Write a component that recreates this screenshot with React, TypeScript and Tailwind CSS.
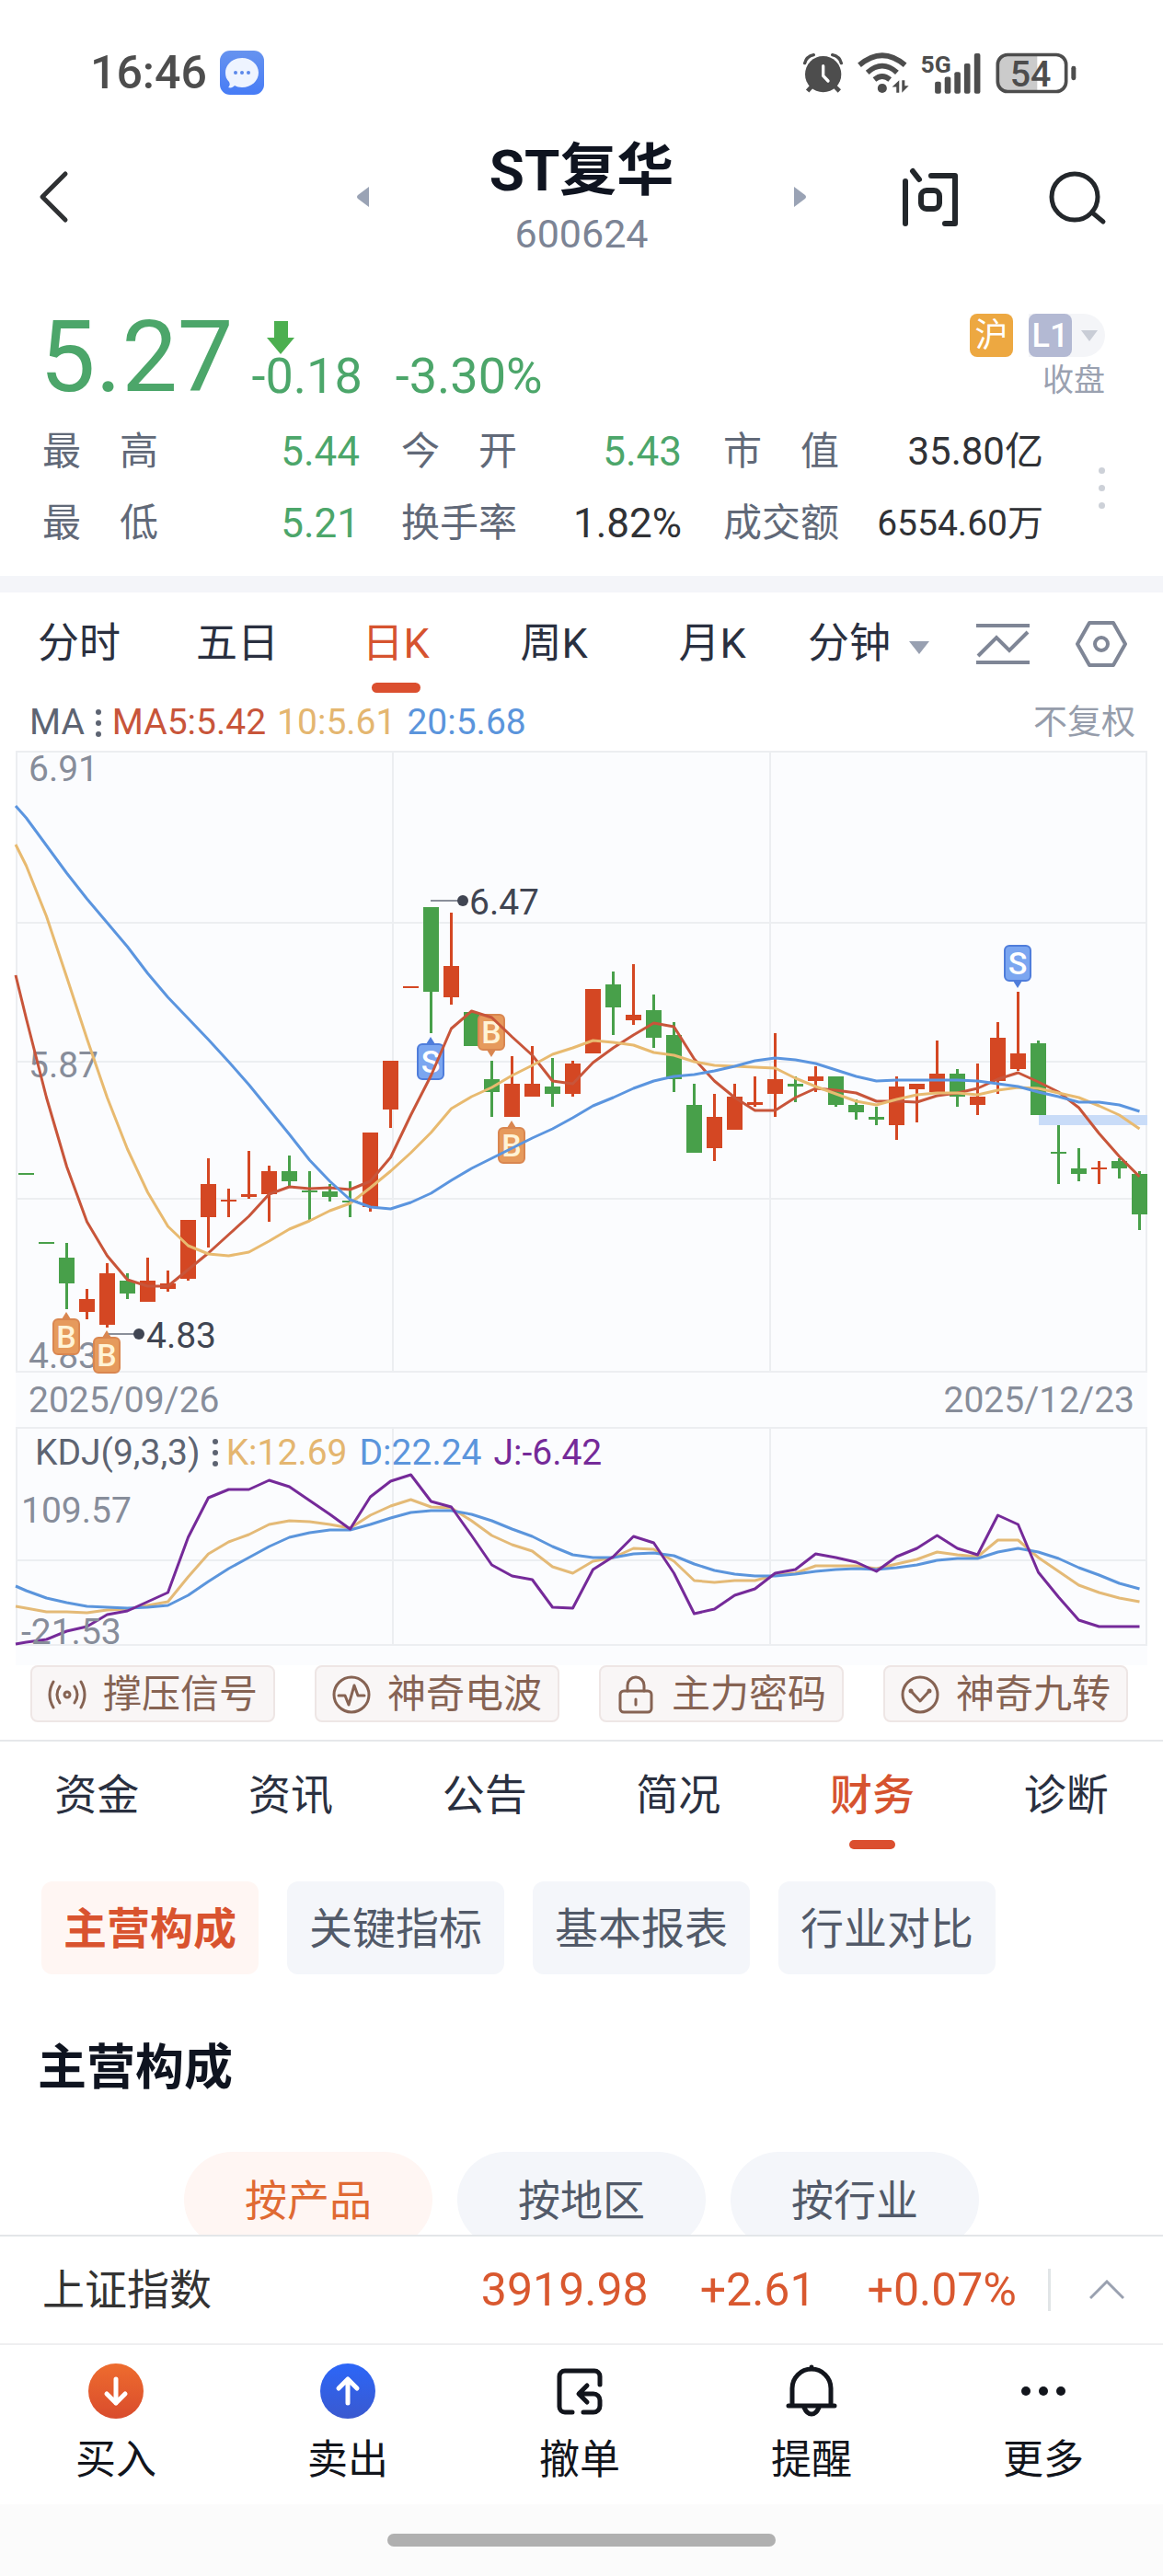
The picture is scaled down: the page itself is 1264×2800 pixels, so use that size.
import { useState } from "react";

type Dir = "up" | "down";
// [direction, high, body top, body bottom, low]
type Candle = [Dir, number, number, number, number];

const STEP = 22;
const FIRST_X = 28.5;
const xAt = (i: number) => FIRST_X + i * STEP;

const CANDLES: Candle[] = [
  ["down", 1275, 1275, 1277, 1277],
  ["down", 1350, 1350, 1352, 1352],
  ["down", 1351, 1367, 1395, 1423],
  ["up", 1401, 1412, 1426, 1434],
  ["up", 1373, 1384, 1440, 1443],
  ["down", 1384, 1392, 1406, 1412],
  ["up", 1367, 1392, 1415, 1415],
  ["up", 1381, 1395, 1401, 1404],
  ["up", 1326, 1326, 1390, 1392],
  ["up", 1259, 1287, 1323, 1356],
  ["up", 1292, 1304, 1306, 1323],
  ["up", 1251, 1298, 1301, 1303],
  ["up", 1267, 1273, 1298, 1328],
  ["down", 1256, 1273, 1284, 1289],
  ["down", 1273, 1294, 1296, 1327],
  ["down", 1287, 1295, 1301, 1306],
  ["down", 1284, 1305, 1307, 1323],
  ["up", 1231, 1231, 1312, 1317],
  ["up", 1153, 1153, 1206, 1226],
  ["up", 1072, 1072, 1074, 1074],
  ["down", 986, 986, 1078, 1123],
  ["up", 992, 1050, 1084, 1092],
  ["down", 1100, 1100, 1137, 1137],
  ["down", 1153, 1173, 1187, 1214],
  ["up", 1148, 1178, 1214, 1214],
  ["up", 1137, 1178, 1192, 1192],
  ["down", 1150, 1181, 1189, 1203],
  ["up", 1153, 1156, 1189, 1192],
  ["up", 1075, 1075, 1145, 1145],
  ["down", 1056, 1070, 1095, 1125],
  ["up", 1048, 1103, 1109, 1114],
  ["down", 1081, 1098, 1128, 1139],
  ["down", 1111, 1125, 1173, 1187],
  ["down", 1178, 1201, 1253, 1253],
  ["up", 1189, 1214, 1248, 1262],
  ["up", 1178, 1192, 1228, 1228],
  ["up", 1170, 1198, 1201, 1203],
  ["up", 1123, 1173, 1189, 1214],
  ["down", 1170, 1178, 1181, 1198],
  ["up", 1159, 1170, 1175, 1187],
  ["down", 1170, 1170, 1201, 1203],
  ["down", 1195, 1201, 1209, 1217],
  ["down", 1203, 1214, 1217, 1223],
  ["up", 1170, 1181, 1223, 1239],
  ["up", 1178, 1178, 1184, 1220],
  ["up", 1131, 1167, 1187, 1187],
  ["down", 1162, 1167, 1192, 1203],
  ["up", 1156, 1192, 1201, 1212],
  ["up", 1111, 1128, 1175, 1189],
  ["up", 1078, 1145, 1162, 1164],
  ["down", 1131, 1134, 1212, 1212],
  ["down", 1223, 1252, 1254, 1287],
  ["down", 1248, 1270, 1276, 1284],
  ["up", 1262, 1269, 1271, 1287],
  ["down", 1259, 1262, 1270, 1281],
  ["down", 1273, 1276, 1320, 1337],
];

// The first value of every series sits on the left edge, the rest on the candles.
const MA5 = [1060, 1107, 1193, 1268, 1328, 1365, 1391, 1398, 1398, 1380, 1362, 1342, 1322, 1298, 1290, 1292, 1291, 1293, 1284, 1258, 1212, 1169, 1118, 1099, 1106, 1127, 1147, 1175, 1178, 1155, 1139, 1125, 1112, 1116, 1151, 1175, 1193, 1207, 1207, 1193, 1183, 1185, 1188, 1197, 1197, 1198, 1191, 1188, 1183, 1173, 1166, 1176, 1187, 1204, 1232, 1257, 1279];
const MA10 = [918, 941, 996, 1062, 1129, 1193, 1249, 1296, 1333, 1354, 1363, 1365, 1361, 1349, 1336, 1327, 1316, 1308, 1291, 1273, 1253, 1231, 1205, 1192, 1182, 1169, 1158, 1146, 1139, 1131, 1133, 1136, 1144, 1147, 1154, 1158, 1159, 1160, 1161, 1172, 1181, 1189, 1197, 1201, 1195, 1190, 1188, 1188, 1190, 1185, 1182, 1183, 1188, 1193, 1202, 1212, 1227];
const MA20 = [876, 889, 919, 949, 977, 1003, 1029, 1058, 1084, 1107, 1130, 1154, 1179, 1206, 1233, 1261, 1284, 1304, 1312, 1314, 1307, 1297, 1283, 1270, 1259, 1248, 1237, 1227, 1215, 1202, 1193, 1183, 1175, 1170, 1168, 1164, 1159, 1153, 1150, 1152, 1156, 1163, 1170, 1175, 1174, 1174, 1174, 1174, 1175, 1178, 1181, 1187, 1192, 1198, 1198, 1201, 1208];

const KDJ_K = [1746, 1748, 1752, 1752, 1753, 1750, 1749, 1745, 1741, 1714, 1689, 1676, 1668, 1657, 1653, 1654, 1657, 1661, 1647, 1637, 1630, 1638, 1639, 1653, 1669, 1679, 1686, 1703, 1710, 1697, 1693, 1683, 1684, 1697, 1718, 1720, 1718, 1718, 1712, 1710, 1702, 1702, 1702, 1705, 1700, 1695, 1687, 1690, 1692, 1674, 1674, 1693, 1708, 1723, 1731, 1737, 1741];
const KDJ_D = [1724, 1729, 1737, 1742, 1746, 1747, 1748, 1747, 1745, 1734, 1719, 1705, 1693, 1681, 1671, 1666, 1663, 1663, 1657, 1650, 1644, 1642, 1642, 1646, 1653, 1662, 1670, 1681, 1690, 1693, 1693, 1689, 1688, 1691, 1700, 1707, 1711, 1713, 1713, 1711, 1708, 1706, 1705, 1706, 1704, 1701, 1696, 1694, 1694, 1687, 1683, 1687, 1694, 1704, 1712, 1721, 1727];
const KDJ_J = [1787, 1785, 1782, 1773, 1768, 1755, 1751, 1741, 1731, 1671, 1628, 1619, 1619, 1609, 1616, 1631, 1646, 1662, 1627, 1610, 1603, 1632, 1638, 1669, 1701, 1713, 1717, 1747, 1748, 1706, 1692, 1670, 1677, 1710, 1754, 1749, 1734, 1727, 1710, 1706, 1689, 1693, 1698, 1708, 1692, 1683, 1669, 1683, 1690, 1647, 1657, 1709, 1736, 1761, 1768, 1768, 1768];

const toPoints = (values: number[]) =>
  values.map((y, i) => `${i === 0 ? 17 : xAt(i - 1)},${y}`).join(" ");

const MARKERS = [
  { kind: "B", x: 72, top: 1433, tip: "up" },
  { kind: "B", x: 116, top: 1453, tip: "up" },
  { kind: "S", x: 468, top: 1134, tip: "up" },
  { kind: "B", x: 534, top: 1102, tip: "down" },
  { kind: "B", x: 556, top: 1225, tip: "up" },
  { kind: "S", x: 1106, top: 1027, tip: "down" },
];

const PERIODS = ["分时", "五日", "日K", "周K", "月K"];
const TABS = ["资金", "资讯", "公告", "简况", "财务", "诊断"];
const CHIPS = ["主营构成", "关键指标", "基本报表", "行业对比"];
const PILLS = ["按产品", "按地区", "按行业"];

const STATS = [
  { label: "最　高", value: "5.44", style: "text-[44px] text-[#4ca66a]" },
  { label: "今　开", value: "5.43", style: "text-[44px] text-[#4ca66a]" },
  { label: "市　值", value: "35.80亿", style: "text-[42px] text-[#303236]" },
  { label: "最　低", value: "5.21", style: "text-[44px] text-[#4ca66a]" },
  { label: "换手率", value: "1.82%", style: "text-[44px] text-[#303236]" },
  { label: "成交额", value: "6554.60万", style: "text-[39px] text-[#303236]" },
];

function StatusBar() {
  return (
    <div className="flex items-center justify-between pt-[54px] pl-[98px] pr-[94px] text-[#4d4d4d]">
      <div className="flex items-center gap-[14px]">
        <span className="text-[50px] leading-[50px] font-medium">16:46</span>
        <svg viewBox="0 0 48 48" className="size-12">
          <defs>
            <linearGradient id="msg" x1="0" y1="0" x2="0" y2="1">
              <stop offset="0" stopColor="#6693ef" />
              <stop offset="1" stopColor="#477cf6" />
            </linearGradient>
          </defs>
          <rect width="48" height="48" rx="11" fill="url(#msg)" />
          <path d="M24 8c10 0 18 7 18 16s-8 16-18 16c-3 0-6-1-8-2-2 2-4 3-7 2 2-2 2-4 1-6-3-3-4-6-4-10C6 15 14 8 24 8z" fill="#eef4ff" />
          <circle cx="17" cy="24" r="2" fill="#5b88ea" />
          <circle cx="24" cy="24" r="2" fill="#5b88ea" />
          <circle cx="31" cy="24" r="2" fill="#5b88ea" />
        </svg>
      </div>
      <div className="flex items-center">
        <svg viewBox="66 55 129 129" className="size-[43px]" fill="currentColor">
          <circle cx="131" cy="123" r="59" />
          <g fill="none" stroke="currentColor" strokeLinecap="round">
            <path d="M71 87q5-22 29-27M190 87q-5-22-29-27" strokeWidth="10" />
            <path d="M94 162l-14 16M168 162l16 16" strokeWidth="14" strokeLinecap="butt" />
            <path d="M131 96v32l16 17" stroke="#fff" strokeWidth="10" />
          </g>
        </svg>
        <svg viewBox="247 50 167 134" className="ml-4 h-[45px] w-14" fill="none" stroke="currentColor" strokeWidth="17">
          <path d="M253 91Q327 28 401 91" />
          <path d="M279 115Q327 72 375 115" />
          <path d="M302 138Q327 117 352 138" />
          <circle cx="327" cy="166" r="15" fill="currentColor" stroke="none" />
          <path d="M382 140v40h-9v-18h-14zM391 140v40l22-22h-13v-18z" fill="currentColor" stroke="none" />
        </svg>
        <svg viewBox="448 48 198 136" className="ml-3 h-[45px] w-[66px] overflow-visible" fill="currentColor">
          <text x="449" y="114" fontSize="80" fontWeight="700">5G</text>
          <rect x="496" y="144" width="20" height="39" rx="6" />
          <rect x="528" y="128" width="20" height="55" rx="6" />
          <rect x="560" y="112" width="20" height="71" rx="6" />
          <rect x="592" y="84" width="20" height="99" rx="6" />
          <rect x="625" y="51" width="20" height="132" rx="6" />
        </svg>
        <svg viewBox="698 48 264 134" className="ml-4 h-[45px] w-[88px] overflow-visible" fill="currentColor">
          <path d="M834 56H735a30 30 0 0 0-30 30v58a30 30 0 0 0 30 30h99z" fill="#cbcbcb" />
          <rect x="705" y="55" width="223" height="120" rx="32" fill="none" stroke="currentColor" strokeWidth="11" />
          <rect x="945" y="92" width="15" height="46" rx="7" />
          <text x="812" y="159" fontSize="118" fontWeight="500" textAnchor="middle">54</text>
        </svg>
      </div>
    </div>
  );
}

function Header() {
  return (
    <header className="grid grid-cols-[1fr_488px_1fr] items-center pt-[42px]">
      <div className="flex pl-[40px]">
        <button type="button" aria-label="返回">
          <svg viewBox="0 0 36 60" className="h-15 w-9" fill="none" stroke="#2f3133" strokeWidth="5" strokeLinecap="round" strokeLinejoin="round">
            <path d="M31 5L6 30l25 25" />
          </svg>
        </button>
      </div>
      <div className="flex items-center justify-between">
        <button type="button" aria-label="上一只">
          <svg viewBox="0 0 13 22" className="h-[22px] w-[13px]" fill="#9aa3b5">
            <path d="M13 0v22L1 13q-2-2 0-4z" />
          </svg>
        </button>
        <div className="text-center">
          <h1 className="text-[62px] leading-20 font-bold text-[#0f1420]">ST复华</h1>
          <p className="text-[43px] leading-14 text-[#7c8495]">600624</p>
        </div>
        <button type="button" aria-label="下一只">
          <svg viewBox="0 0 13 22" className="h-[22px] w-[13px]" fill="#9aa3b5">
            <path d="M0 0v22l12-9q2-2 0-4z" />
          </svg>
        </button>
      </div>
      <div className="flex justify-end gap-[95px] pr-[60px]">
        <button type="button" aria-label="提问">
          <svg viewBox="0 0 64 66" className="h-[66px] w-16" fill="none" stroke="#23272b" strokeWidth="6" strokeLinecap="round" strokeLinejoin="round">
            <line x1="5" y1="16" x2="5" y2="62" />
            <line x1="13" y1="5" x2="20" y2="14" />
            <polyline points="33,10 59,10 59,62 48,62" />
            <rect x="22" y="26" width="20" height="20" rx="6" />
          </svg>
        </button>
        <button type="button" aria-label="搜索">
          <svg viewBox="0 0 66 62" className="h-[62px] w-[66px]" fill="none" stroke="#23272b" strokeWidth="5" strokeLinecap="round">
            <circle cx="30" cy="31" r="25" />
            <path d="M49 48l12 10" />
          </svg>
        </button>
      </div>
    </header>
  );
}

function Quote() {
  return (
    <section className="pt-[51px]">
      <div className="flex items-end justify-between pl-[43px] pr-[63px] text-[#4ca66a]">
        <div className="flex items-end">
          <span className="text-[108px] leading-[110px]">5.27</span>
          <div className="ml-5 pb-[10px]">
            <svg viewBox="0 0 30 36" className="ml-[16px] h-9 w-[30px]">
              <path d="M8 0h15v18h7L15 36 0 18h8z" fill="#4caf50" />
            </svg>
            <p className="flex gap-9 text-[54px] leading-12">
              <span>-0.18</span>
              <span>-3.30%</span>
            </p>
          </div>
        </div>
        <div className="flex flex-col items-end self-start pt-2">
          <div className="flex gap-[17px]">
            <span className="flex h-[47px] w-[47px] items-center justify-center rounded-lg bg-[#eda841] text-[36px] leading-none text-white">沪</span>
            <button type="button" aria-label="行情级别" className="flex items-center gap-[10px] rounded-l-lg rounded-r-full bg-[#f4f5f8] pr-2">
              <span className="flex h-[47px] w-[47px] items-center justify-center rounded-lg bg-[#b3b9d3] text-[36px] leading-none font-medium text-white">L1</span>
              <svg viewBox="0 0 18 12" className="h-3 w-[18px]" fill="#c9cdd6">
                <path d="M0 0h18L9 12z" />
              </svg>
            </button>
          </div>
          <span className="text-[34px] leading-[50px] text-[#9aa1b0]">收盘</span>
        </div>
      </div>
      <div className="flex items-center justify-between pt-[9px] pb-[18px] pl-[46px] pr-[63px]">
        <dl className="grid w-[1088px] grid-cols-[344fr_304fr_347fr] gap-x-[45px]">
          {STATS.map((s) => (
            <div key={s.label} className="flex justify-between leading-[78px]">
              <dt className="text-[42px] text-[#616978]">{s.label}</dt>
              <dd className={s.style}>{s.value}</dd>
            </div>
          ))}
        </dl>
        <button type="button" aria-label="更多行情" className="flex flex-col gap-3">
          <span className="size-[7px] rounded-full bg-[#cdd1d8]" />
          <span className="size-[7px] rounded-full bg-[#cdd1d8]" />
          <span className="size-[7px] rounded-full bg-[#cdd1d8]" />
        </button>
      </div>
    </section>
  );
}

function PeriodTabs() {
  const [active, setActive] = useState("日K");

  return (
    <nav className="grid grid-cols-[repeat(5,172fr)_404fr] items-start pt-[23px] text-[45px] leading-[66px] text-[#2a3040]">
      {PERIODS.map((p) => (
        <button key={p} type="button" onClick={() => setActive(p)} className="flex flex-col items-center gap-[9px]">
          <span className={p === active ? "text-[#d6532f]" : ""}>{p}</span>
          {p === active && <span className="h-[11px] w-[53px] rounded-full bg-[#db4f2f]" />}
        </button>
      ))}
      <div className="flex items-center justify-between pl-[18px] pr-[39px]">
        <button type="button" aria-haspopup="menu" className="flex items-center gap-5">
          分钟
          <svg viewBox="0 0 22 14" className="mt-2 h-[14px] w-[22px]" fill="#98a0b1">
            <path d="M0 0h22L11 14z" />
          </svg>
        </button>
        <button type="button" aria-label="画线">
          <svg viewBox="0 0 58 48" className="h-12 w-[58px]" fill="none" stroke="#7f8696" strokeWidth="4">
            <path d="M0 4h58M0 44h58M2 37l20-20 14 14 20-20" />
          </svg>
        </button>
        <button type="button" aria-label="设置">
          <svg viewBox="0 0 56 50" className="h-[50px] w-14" fill="none" stroke="#7f8696" strokeWidth="4" strokeLinejoin="round">
            <path d="M15 2h26l13 23-13 23H15L2 25z" />
            <circle cx="28" cy="25" r="7" />
          </svg>
        </button>
      </div>
    </nav>
  );
}

function Dots() {
  return (
    <span className="flex flex-col gap-[6px]">
      <span className="size-[6px] rounded-full bg-[#5d6472]" />
      <span className="size-[6px] rounded-full bg-[#5d6472]" />
      <span className="size-[6px] rounded-full bg-[#5d6472]" />
    </span>
  );
}

function Marker({ kind, x, top, tip }: { kind: string; x: number; top: number; tip: string }) {
  const sell = kind === "S";
  const fill = sell ? "#7ba6f0" : "#e69a5c";
  const stroke = sell ? "#4f7ddb" : "#d98650";
  return (
    <g>
      <path
        d={tip === "up" ? `M${x - 5} ${top + 1}l5-8 5 8z` : `M${x - 5} ${top + 39}l5 8 5-8z`}
        fill={stroke}
      />
      <rect x={x - 14} y={top + 1} width="28" height="38" rx="5" fill={fill} stroke={stroke} strokeWidth="2" />
      <text x={x} y={top + 32} fontSize="34" fontWeight="500" textAnchor="middle" fill={sell ? "#fff" : "#fff3d6"}>
        {kind}
      </text>
    </g>
  );
}

function CandleChart() {
  return (
    <svg viewBox="17 816 1230 676" className="block w-full overflow-visible" role="img" aria-label="日K线图">
      <g stroke="#eceef1" strokeWidth="2" fill="none">
        <path d="M17 817h1230M17 1003h1230M17 1154h1230M17 1303h1230M17 1491h1230" />
        <path d="M18 816v676M427 816v676M837 816v676M1246 816v676" />
      </g>
      <rect x="1129" y="1212" width="118" height="11" fill="#c9dcf8" />
      {CANDLES.map(([dir, high, top, bottom, low], i) => (
        <g key={i} fill={dir === "up" ? "#d44723" : "#48a04a"}>
          <rect x={xAt(i) - 1.5} y={high} width="3" height={low - high} />
          <rect x={xAt(i) - 8.5} y={top} width="17" height={bottom - top} />
        </g>
      ))}
      <g fontSize="39" fill="#878d9a">
        <text x="31" y="849">6.91</text>
        <text x="31" y="1171">5.87</text>
        <text x="31" y="1487">4.83</text>
      </g>
      {MARKERS.map((m) => (
        <Marker key={m.x} {...m} />
      ))}
      <g fill="none" strokeWidth="3" strokeLinejoin="round">
        <polyline points={toPoints(MA5)} stroke="#c8553a" />
        <polyline points={toPoints(MA10)} stroke="#e8ba70" />
        <polyline points={toPoints(MA20)} stroke="#5b95df" />
      </g>
      <g fontSize="39" fill="#404552">
        <path d="M468 979h32M118 1450h30" stroke="#8a8f9a" strokeWidth="2" />
        <circle cx="503" cy="979" r="6" />
        <text x="510" y="994">6.47</text>
        <circle cx="151" cy="1450" r="6" />
        <text x="159" y="1465">4.83</text>
      </g>
    </svg>
  );
}

function KdjChart() {
  return (
    <div className="relative">
      <svg viewBox="17 1551 1230 238" className="block w-full overflow-visible" role="img" aria-label="KDJ指标图">
        <g stroke="#eceef1" strokeWidth="2" fill="none">
          <path d="M17 1552h1230M17 1696h1230M17 1788h1230" />
          <path d="M18 1551v238M427 1551v238M837 1551v238M1246 1551v238" />
        </g>
        <g fill="none" strokeWidth="3" strokeLinejoin="round">
          <polyline points={toPoints(KDJ_K)} stroke="#e4ba77" />
          <polyline points={toPoints(KDJ_D)} stroke="#5b95dc" />
          <polyline points={toPoints(KDJ_J)} stroke="#752a99" />
        </g>
        <g fontSize="39" fill="#878d9a">
          <text x="23" y="1655">109.57</text>
          <text x="23" y="1787">-21.53</text>
        </g>
      </svg>
      <div className="absolute top-0 left-[21px] flex items-center gap-[13px] text-[39px] leading-[56px]">
        <span className="text-[#5d6472]">KDJ(9,3,3)</span>
        <Dots />
        <span className="-ml-1 text-[#e4b670]">K:12.69</span>
        <span className="text-[#5b95dc]">D:22.24</span>
        <span className="text-[#752a99]">J:-6.42</span>
      </div>
    </div>
  );
}

function Chart() {
  return (
    <section>
      <div className="flex h-[63px] items-center justify-between pt-[2px] pl-[32px] pr-[30px] text-[39px]">
        <div className="flex items-center gap-3">
          <span className="text-[#5d6472]">MA</span>
          <Dots />
          <span className="text-[#c8553a]">MA5:5.42</span>
          <span className="text-[#e4b670]">10:5.61</span>
          <span className="text-[#5b95dc]">20:5.68</span>
        </div>
        <button type="button" className="text-[37px] text-[#969dab]">不复权</button>
      </div>
      <div className="mx-[17px] bg-[#fbfcfe] pb-[21px]">
        <CandleChart />
        <div className="flex justify-between px-[14px] pt-[2px] text-[39px] leading-[57px] text-[#878d9a]">
          <span>2025/09/26</span>
          <span>2025/12/23</span>
        </div>
        <KdjChart />
      </div>
    </section>
  );
}

const SIGNALS = [
  {
    label: "撑压信号",
    icon: (
      <>
        <circle cx="21" cy="21" r="3" />
        <path d="M13 12q-6 9 0 18M29 12q6 9 0 18M6 7q-8 14 0 28M36 7q8 14 0 28" />
      </>
    ),
  },
  {
    label: "神奇电波",
    icon: (
      <>
        <circle cx="21" cy="21" r="19" />
        <path d="M7 22h7l4 10 6-21 4 11h7" />
      </>
    ),
  },
  {
    label: "主力密码",
    icon: (
      <>
        <rect x="4" y="17" width="34" height="23" rx="4" />
        <path d="M12 17v-6a9 9 0 0 1 18 0v6M21 26v6" />
      </>
    ),
  },
  {
    label: "神奇九转",
    icon: (
      <>
        <circle cx="21" cy="21" r="19" />
        <path d="M11 17l10 11 10-11" />
        <circle cx="11" cy="17" r="1" />
        <circle cx="31" cy="17" r="1" />
      </>
    ),
  },
];

function Signals() {
  return (
    <div className="grid grid-cols-4 gap-[43px] pb-[19px] pl-[33px] pr-[38px]">
      {SIGNALS.map((s) => (
        <button
          key={s.label}
          type="button"
          className="flex h-[62px] items-center justify-center gap-[18px] rounded-lg border-2 border-[#eee6e5] bg-[#f9f6f6] pt-[2px] text-[42px] leading-none whitespace-nowrap text-[#866353]"
        >
          <svg viewBox="0 0 42 42" className="size-[42px]" fill="none" stroke="currentColor" strokeWidth="3" strokeLinecap="round" strokeLinejoin="round">
            {s.icon}
          </svg>
          {s.label}
        </button>
      ))}
    </div>
  );
}

function Finance() {
  const [tab, setTab] = useState("财务");
  const [chip, setChip] = useState("主营构成");
  const [pill, setPill] = useState("按产品");

  return (
    <section className="border-t-2 border-[#e6e8ea]">
      <nav className="grid h-[117px] grid-cols-6 items-start pt-[25px] text-[46px] leading-[66px] text-[#2a3040]">
        {TABS.map((t) => (
          <button key={t} type="button" onClick={() => setTab(t)} className="flex flex-col items-center gap-[16px]">
            <span className={t === tab ? "font-medium text-[#d6532f]" : ""}>{t}</span>
            {t === tab && <span className="h-[10px] w-[50px] rounded-full bg-[#db4f2f]" />}
          </button>
        ))}
      </nav>
      <div className="flex gap-[31px] pt-[35px] pl-[45px]">
        {CHIPS.map((c) => (
          <button
            key={c}
            type="button"
            onClick={() => setChip(c)}
            className={`h-[101px] rounded-xl px-6 pt-1 text-[47px] ${
              c === chip ? "bg-[#fff6f3] font-bold text-[#d9532f]" : "bg-[#f4f6fa] text-[#525a69]"
            }`}
          >
            {c}
          </button>
        ))}
      </div>
      <h2 className="pt-[62px] pl-[41px] text-[53px] leading-20 font-bold text-[#0f1420]">主营构成</h2>
      <div className="flex justify-center gap-[27px] pt-[51px]">
        {PILLS.map((p) => (
          <button
            key={p}
            type="button"
            onClick={() => setPill(p)}
            className={`h-[104px] w-[270px] rounded-full pt-[2px] text-[46px] ${
              p === pill ? "bg-[#fff6f3] text-[#e06a33]" : "bg-[#f4f6fa] text-[#525a69]"
            }`}
          >
            {p}
          </button>
        ))}
      </div>
    </section>
  );
}

const ACTIONS = [
  {
    label: "买入",
    icon: (
      <>
        <defs>
          <linearGradient id="buy" x1="0" y1="0" x2="0" y2="1">
            <stop offset="0" stopColor="#ee6c2e" />
            <stop offset="1" stopColor="#d94c2d" />
          </linearGradient>
        </defs>
        <circle cx="30" cy="30" r="30" fill="url(#buy)" stroke="none" />
        <path d="M30 17v26M20 33l10 10 10-10" stroke="#fff" />
      </>
    ),
  },
  {
    label: "卖出",
    icon: (
      <>
        <defs>
          <linearGradient id="sell" x1="0" y1="0" x2="0" y2="1">
            <stop offset="0" stopColor="#2c66f8" />
            <stop offset="1" stopColor="#3a59cf" />
          </linearGradient>
        </defs>
        <circle cx="30" cy="30" r="30" fill="url(#sell)" stroke="none" />
        <path d="M30 43V17M20 27l10-10 10 10" stroke="#fff" />
      </>
    ),
  },
  {
    label: "撤单",
    icon: (
      <path d="M52 23v-9a6 6 0 0 0-6-6H14a6 6 0 0 0-6 6v33a6 6 0 0 0 6 6h8M38 24l-9 9 9 9M30 33h15a7 7 0 0 1 7 7v6a7 7 0 0 1-7 7H34" />
    ),
  },
  {
    label: "提醒",
    icon: <path d="M30 6V4M9 46V27a21 21 0 0 1 42 0v19M5 46h50M22 48q3 7 8 7t8-7" />,
  },
  {
    label: "更多",
    icon: (
      <g fill="currentColor" stroke="none">
        <circle cx="11" cy="30" r="5" />
        <circle cx="30" cy="30" r="5" />
        <circle cx="49" cy="30" r="5" />
      </g>
    ),
  },
];

function Footer() {
  return (
    <footer>
      <div className="flex h-[118px] items-center border-t-2 border-[#e3e6e9] pl-[46px] pr-[42px] text-[50px]">
        <span className="flex-1 text-[46px] text-[#333]">上证指数</span>
        <div className="flex gap-14 text-[#d9582f]">
          <span>3919.98</span>
          <span>+2.61</span>
          <span>+0.07%</span>
        </div>
        <span className="ml-[34px] h-[46px] w-[3px] bg-[#e1e5e7]" />
        <button type="button" aria-label="展开" className="ml-[42px]">
          <svg viewBox="0 0 38 22" className="h-[22px] w-[38px]" fill="none" stroke="#9aa1b0" strokeWidth="3">
            <path d="M1 20L19 2l18 18" />
          </svg>
        </button>
      </div>
      <nav className="grid grid-cols-5 border-t-2 border-[#efeff1] pt-5 pr-1 pb-[18px] text-[44px] leading-15 text-[#12151c]">
        {ACTIONS.map((a) => (
          <button key={a.label} type="button" className="flex flex-col items-center gap-[15px]">
            <svg viewBox="0 0 60 60" className="size-15" fill="none" stroke="currentColor" strokeWidth="5" strokeLinecap="round" strokeLinejoin="round">
              {a.icon}
            </svg>
            {a.label}
          </button>
        ))}
      </nav>
      <div className="flex h-[78px] items-center justify-center bg-[#fbfbfb]">
        <span className="h-[14px] w-1/3 rounded-full bg-[#b0b0b0]" />
      </div>
    </footer>
  );
}

export default function App() {
  return (
    <div className="flex h-screen flex-col bg-white font-['Roboto','Noto_Sans_CJK_SC',sans-serif]">
      <main className="min-h-0 flex-1 overflow-hidden">
        <StatusBar />
        <Header />
        <Quote />
        <div className="h-[18px] bg-[#f4f5f9]" />
        <PeriodTabs />
        <Chart />
        <Signals />
        <Finance />
      </main>
      <Footer />
    </div>
  );
}
